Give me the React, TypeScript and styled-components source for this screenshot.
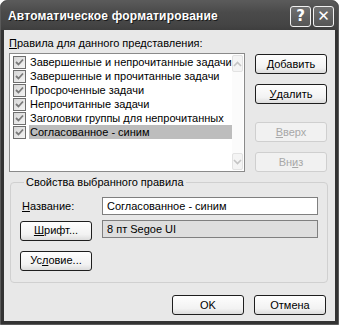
import React from "react";
import styled, { createGlobalStyle } from "styled-components";

const Global = createGlobalStyle`
  html, body { margin: 0; padding: 0; background: #ffffff; }
  * { box-sizing: border-box; }
`;

const Window = styled.div`
  width: 339px;
  height: 325px;
  display: flex;
  flex-direction: column;
  background: #333;
  border: 1px solid #5a5a5a;
  border-radius: 7px 7px 0 0;
  padding: 0 3px 3px;
  font-family: "Liberation Sans", Arial, sans-serif;
  font-size: 11px;
  color: #000;
  overflow: hidden;
`;

const TitleBar = styled.div`
  height: 29px;
  flex: none;
  display: flex;
  align-items: center;
  background: linear-gradient(#5a5a5a, #4a4a4a 40%, #454545 80%, #3e3e3e);
  margin: 0 -3px;
  padding: 1px 4px 0 7px;
`;

const Title = styled.div`
  flex: 1;
  color: #fff;
  font-family: "Liberation Sans", Arial, sans-serif;
  font-weight: bold;
  font-size: 12px;
  letter-spacing: 0.2px;
  text-shadow: 1px 1px 0 #1a1a1a;
`;

const CapButton = styled.div`
  width: 21px;
  height: 21px;
  margin-left: 2px;
  border: 1px solid #f0f0f0;
  border-radius: 3px;
  background: linear-gradient(#707070, #555);
  color: #fff;
  display: flex;
  align-items: center;
  justify-content: center;
  font-family: "DejaVu Sans", sans-serif;
  font-weight: bold;
  font-size: 15px;
  line-height: 1;
`;

const Client = styled.div`
  flex: 1;
  background: #e8e8e8;
  padding: 7px 9px 0 5px;
  display: flex;
  flex-direction: column;
`;

const Label = styled.div`
  height: 16px;
  line-height: 13px;
`;

const Top = styled.div`
  display: grid;
  grid-template-columns: 236px 72px;
  column-gap: 10px;
  height: 119px;
`;

const ListBox = styled.div`
  border: 1px solid #8a8a8a;
  background: #fff;
  display: flex;
  padding: 1px;
`;

const Rows = styled.div`
  flex: 1;
  display: flex;
  flex-direction: column;
`;

const Row = styled.div`
  height: 14px;
  display: flex;
  align-items: center;
  padding-left: 2px;
  white-space: nowrap;
  overflow: hidden;
`;

const Box = styled.span`
  width: 13px;
  height: 13px;
  flex: none;
  border: 1px solid #6e6e6e;
  background: linear-gradient(135deg, #d6d6d6, #f4f4f4);
  display: flex;
  align-items: center;
  justify-content: center;
  margin-right: 3px;
`;

const RowText = styled.span<{ $sel?: boolean }>`
  flex: 1;
  height: 14px;
  line-height: 14px;
  padding-left: 1px;
  background: ${(p) => (p.$sel ? "#bdbdbd" : "transparent")};
  overflow: hidden;
`;

const Scroll = styled.div`
  width: 17px;
  display: flex;
  flex-direction: column;
  justify-content: space-between;
  background: #fbfbfb;
`;

const Arrow = styled.div`
  height: 17px;
  border: 1px solid #e2e2e2;
  border-radius: 2px;
  background: #f4f4f4;
  display: flex;
  align-items: center;
  justify-content: center;
`;

const Buttons = styled.div`
  display: flex;
  flex-direction: column;
  padding-top: 1px;
`;

const Btn = styled.div<{ $off?: boolean; $gap?: number }>`
  width: 72px;
  height: 20px;
  margin-top: ${(p) => p.$gap ?? 0}px;
  border: 1px solid ${(p) => (p.$off ? "#cfcfcf" : "#1e1e1e")};
  border-radius: 3px;
  background: ${(p) =>
    p.$off ? "#f1f1f1" : "linear-gradient(#fefefe, #f2f2f2 70%, #dcdcdc)"};
  color: ${(p) => (p.$off ? "#a8a8a8" : "#000")};
  display: flex;
  align-items: center;
  justify-content: center;
  line-height: 1;
`;

const U = styled.span`
  text-decoration: underline;
  text-underline-offset: 1px;
`;

const Group = styled.fieldset`
  margin: 4px 0 0 1px;
  width: 318px;
  height: 107px;
  border: 1px solid #d0d0d0;
  border-radius: 4px;
  padding: 9px 9px 0 9px;
  display: grid;
  grid-template-columns: 76px 216px;
  grid-template-rows: 18px 21px 21px;
  row-gap: 5px;
  column-gap: 6px;
  align-items: center;
  align-content: start;
`;

const Legend = styled.legend`
  padding: 0 2px;
  margin-left: 4px;
  color: #000;
  line-height: 12px;
`;

const Field = styled.div<{ $ro?: boolean }>`
  height: 18px;
  border: 1px solid #7f7f7f;
  background: ${(p) => (p.$ro ? "#dedede" : "#fff")};
  padding-left: 4px;
  line-height: 16px;
  align-self: start;
`;

const FieldLabel = styled.div`
  padding-left: 2px;
`;

const Footer = styled.div`
  display: flex;
  justify-content: flex-end;
  gap: 10px;
  margin-top: 12px;
`;

const Check = () => (
  <svg width="9" height="9" viewBox="0 0 9 9">
    <path d="M1 4 L3.5 6.5 L8 1.5" stroke="#7a7a7a" strokeWidth="1.8" fill="none" />
  </svg>
);

const Chevron = ({ up }: { up?: boolean }) => (
  <svg width="9" height="6" viewBox="0 0 9 6">
    <path
      d={up ? "M1 5 L4.5 1.5 L8 5" : "M1 1 L4.5 4.5 L8 1"}
      stroke="#c4c4c4"
      strokeWidth="1.6"
      fill="none"
    />
  </svg>
);

const rules = [
  "Завершенные и непрочитанные задачи",
  "Завершенные и прочитанные задачи",
  "Просроченные задачи",
  "Непрочитанные задачи",
  "Заголовки группы для непрочитанных",
  "Согласованное - синим",
];

export default function App() {
  return (
    <>
      <Global />
      <Window>
        <TitleBar>
          <Title>Автоматическое форматирование</Title>
          <CapButton>?</CapButton>
          <CapButton>✕</CapButton>
        </TitleBar>
        <Client>
          <Label>
            <U>П</U>равила для данного представления:
          </Label>
          <Top>
            <ListBox>
              <Rows>
                {rules.map((r, i) => (
                  <Row key={r}>
                    <Box>
                      <Check />
                    </Box>
                    <RowText $sel={i === rules.length - 1}>{r}</RowText>
                  </Row>
                ))}
              </Rows>
              <Scroll>
                <Arrow>
                  <Chevron up />
                </Arrow>
                <Arrow>
                  <Chevron />
                </Arrow>
              </Scroll>
            </ListBox>
            <Buttons>
              <Btn>
                <U>Д</U>обавить
              </Btn>
              <Btn $gap={10}>
                <U>У</U>далить
              </Btn>
              <Btn $off $gap={18}>
                <U>В</U>верх
              </Btn>
              <Btn $off $gap={10}>
                Вн<U>и</U>з
              </Btn>
            </Buttons>
          </Top>
          <Group>
            <Legend>Свойства выбранного правила</Legend>
            <FieldLabel>
              <U>Н</U>азвание:
            </FieldLabel>
            <Field>Согласованное - синим</Field>
            <Btn>
              <U>Ш</U>рифт...
            </Btn>
            <Field $ro>8 пт Segoe UI</Field>
            <Btn $gap={8}>
              Ус<U>л</U>овие...
            </Btn>
          </Group>
          <Footer>
            <Btn>OK</Btn>
            <Btn>Отмена</Btn>
          </Footer>
        </Client>
      </Window>
    </>
  );
}
